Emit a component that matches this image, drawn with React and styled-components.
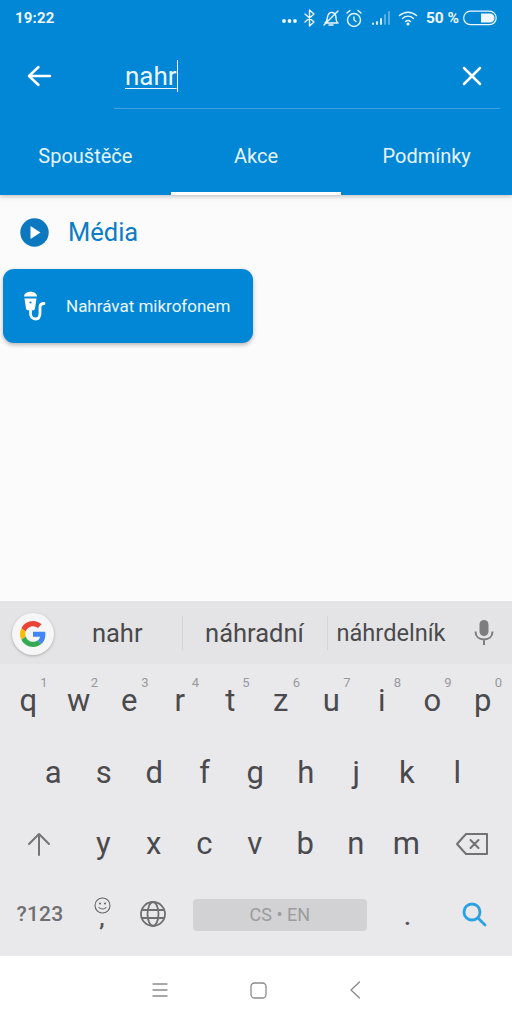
import React from 'react';
import styled, { createGlobalStyle } from 'styled-components';

const Global = createGlobalStyle`
  html, body { margin: 0; padding: 0; background: #fbfbfc; }
  * { box-sizing: border-box; }
`;
const Page = styled.div`
  width: 512px; height: 1024px; display: flex; flex-direction: column; overflow: hidden;
  font-family: Roboto, "Liberation Sans", sans-serif; background: #fbfbfc;
`;
const Header = styled.header`
  height: 195px; background: #0286d6; color: #fff; display: flex; flex-direction: column;
  box-shadow: 0 2px 4px rgba(0,0,0,.2); position: relative; z-index: 1;
`;
const StatusBar = styled.div`
  height: 36px; display: flex; align-items: center; justify-content: space-between; padding: 0 15px 0 15px;
`;
const Clock = styled.span`font-size: 15px; font-weight: 700; letter-spacing: .2px; color: #eef7fd;`;
const StatusIcons = styled.div`display: flex; align-items: center; color: #eef7fd;`;
const Spacer = styled.span`width: ${p => p.$w}px;`;
const Battery = styled.span`font-size: 15.5px; font-weight: 700; margin: 0 4px 0 8px;`;
const SearchRow = styled.div`
  height: 73px; display: flex; align-items: stretch; padding-right: 12px;
`;
const IconSlot = styled.div`
  width: 114px; display: flex; align-items: center; padding: 6px 0 0 26px;
`;
const SearchField = styled.div`
  flex: 1; display: flex; align-items: center; justify-content: space-between;
  border-bottom: 1px solid #3ba3e2; padding: 7px 17px 0 11px;
`;
const Query = styled.span`
  font-size: 26px; line-height: 32px; text-decoration: underline; text-decoration-thickness: 1px;
  text-underline-offset: 3px; border-right: 1px solid #fff; color: #eaf6fd;
`;
const Tabs = styled.nav`flex: 1; display: grid; grid-template-columns: repeat(3, 1fr);`;
const Tab = styled.div`
  display: flex; align-items: center; justify-content: center; font-size: 20px; color: #e6f4fc;
  padding-top: 10px; border-bottom: 3px solid ${p => (p.$active ? '#fff' : 'transparent')};
`;
const Content = styled.main`flex: 1; padding: 0 0 0 3px;`;
const SectionTitle = styled.div`
  height: 74px; display: flex; align-items: center; gap: 19px; padding: 0 0 0 17px;
  font-size: 25.5px; color: #0b7cc6;
`;
const ActionCard = styled.div`
  width: 250px; height: 74px; border-radius: 11px; background: #0286d6; color: #eaf6fd;
  display: flex; align-items: center; gap: 20px; padding-left: 20px; font-size: 17px;
  box-shadow: 0 2px 4px rgba(0,0,0,.28);
`;
const Keyboard = styled.section`height: 355px; background: #e9e8eb; display: flex; flex-direction: column;`;
const Suggestions = styled.div`
  height: 63px; background: #e4e4e6; display: grid; grid-template-columns: 66px 116.500px 145px 1fr 42px; align-items: center;
`;
const GoogleButton = styled.div`
  width: 42px; height: 42px; margin: 2px 0 0 12px; border-radius: 50%; background: #f6f6f6;
  box-shadow: 0 1px 3px rgba(0,0,0,.25); display: flex; align-items: center; justify-content: center;
`;
const Suggestion = styled.div`
  height: 34px; display: flex; align-items: center; justify-content: ${p => p.$start ? 'flex-start' : 'center'};
  font-size: ${p => p.$size || 25.5}px; color: #4a4a4c; padding: ${p => p.$pad || '0'};
  border-right: ${p => (p.$divider ? '1px solid #d4d4d6' : 'none')};
`;
const MicSlot = styled.div`display: flex; justify-content: center; padding-right: 14px;`;
const KeyRow = styled.div`
  height: ${p => p.$h}px; display: grid; grid-template-columns: repeat(${p => p.$cols}, 50.500px);
  padding-left: ${p => p.$inset}px; align-items: center;
`;
const ShiftRow = styled.div`
  height: 71px; display: grid; grid-template-columns: 78px repeat(7, 50.500px) 1fr; align-items: center;
`;
const Key = styled.div`
  position: relative; height: 100%; display: flex; align-items: center; justify-content: center;
  font-size: 31px; color: #4a4a4d;
`;
const Hint = styled.sup`
  position: absolute; right: 6px; top: 11px; font-size: 13px; line-height: 16px; color: #9a9a9c;
`;
const FnKey = styled.span`font-size: 21px; font-weight: 500; color: #6f6f72; letter-spacing: .2px; padding-left: 3px;`;
const EmojiStack = styled.div`display: flex; flex-direction: column; align-items: center; color: #555;`;
const Comma = styled.span`font-size: 22px; line-height: 10px; font-weight: 700; color: #555; height: 16px;`;
const LastRow = styled.div`
  height: 69px; display: grid; grid-template-columns: 76.800px 50.500px 50.500px 174px 1fr 76px; align-items: center;
`;
const LastKey = styled.div`display: flex; align-items: center; justify-content: center; height: 100%;`;
const SpaceBar = styled.div`
  height: 32px; margin-top: 2px; background: #d2d1d4; border-radius: 4px; color: #9c9c9e; font-size: 18px;
  display: flex; align-items: center; justify-content: center; margin-left: 15px; width: 174px;
`;
const Dot = styled.span`font-size: 22px; color: #555; font-weight: 700; padding: 0 0 0 27px; position: relative; top: 4px;`;
const NavBar = styled.footer`
  height: 68px; background: #fff; display: flex; align-items: center; justify-content: center; gap: 82px;
`;

const row1 = [['q','1'],['w','2'],['e','3'],['r','4'],['t','5'],['z','6'],['u','7'],['i','8'],['o','9'],['p','0']];
const row2 = ['a','s','d','f','g','h','j','k','l'];
const row3 = ['y','x','c','v','b','n','m'];

const Stroke = ({ w, h, sw = 2, color = 'currentColor', children }) => (
  <svg width={w} height={h} viewBox={`0 0 ${w} ${h}`} fill="none" stroke={color} strokeWidth={sw} strokeLinecap="round" strokeLinejoin="round">{children}</svg>
);

export default function App() {
  return (
    <Page>
      <Global />
      <Header>
        <StatusBar>
          <Clock>19:22</Clock>
          <StatusIcons>
            <Stroke w={20} h={18} sw={0}><circle cx="4" cy="12" r="1.9" fill="#eef7fd"/><circle cx="9.5" cy="12" r="1.9" fill="#eef7fd"/><circle cx="15" cy="12" r="1.9" fill="#eef7fd"/></Stroke>
            <Spacer $w={3} />
            <Stroke w={14} h={20} sw={1.4}><path d="M2 6l9 8-4.5 4V2L11 6 2 14"/></Stroke>
            <Spacer $w={5} />
            <Stroke w={18} h={18} sw={1.4}><path d="M3 14c2-1 2-3 2.500-6 .6-3 2.500-5 5-4.500C13 4 14 6 14 9c0 3 .6 4 2 5zM7 16h4M2 16L16 2"/></Stroke>
            <Spacer $w={5} />
            <Stroke w={18} h={19} sw={1.4}><circle cx="9" cy="11" r="6.500"/><path d="M9 8v3l2 1.500M2 4l3-2.500M16 4l-3-2.500"/></Stroke>
            <Spacer $w={8} />
            <Stroke w={20} h={16} sw={1.800}>
              <path d="M2 14v-.5M6 14v-2M10 14V9"/>
              <path d="M14 14V5M18 14V2" opacity=".4"/>
            </Stroke>
            <Spacer $w={7} />
            <Stroke w={20} h={16} sw={1.500}><path d="M1.500 5.500c5-4.500 12-4.500 17 0M4.500 8.500c3.300-3 7.700-3 11 0M7.500 11.500c1.500-1.300 3.500-1.300 5 0"/><circle cx="10" cy="14" r=".8" fill="currentColor"/></Stroke>
            <Battery>50 %</Battery>
            <svg width="34" height="16" viewBox="0 0 34 16"><rect x=".7" y="1.200" width="32.500" height="13.500" rx="6.700" fill="none" stroke="#eef7fd" strokeWidth="1.200"/><path d="M18 3.500h9a4.500 4.500 0 010 9h-9z" fill="#eef7fd"/></svg>
          </StatusIcons>
        </StatusBar>
        <SearchRow>
          <IconSlot>
            <Stroke w={26} h={24} sw={2.500} color="#fff"><path d="M24 12H3M12.500 3L3 12l9.500 9"/></Stroke>
          </IconSlot>
          <SearchField>
            <Query>nahr</Query>
            <Stroke w={22} h={22} sw={2.500} color="#fff"><path d="M3 3l16 16M19 3L3 19"/></Stroke>
          </SearchField>
        </SearchRow>
        <Tabs>
          <Tab>Spouštěče</Tab>
          <Tab $active>Akce</Tab>
          <Tab>Podmínky</Tab>
        </Tabs>
      </Header>
      <Content>
        <SectionTitle>
          <svg width="29" height="29" viewBox="0 0 29 29"><circle cx="14.500" cy="14.500" r="14.200" fill="#0b78c0"/><path d="M10.500 8v13l10-6.500z" fill="#fff"/></svg>
          Média
        </SectionTitle>
        <ActionCard>
          <svg width="23" height="30" viewBox="0 0 23 30" fill="none"><path d="M1 5.500C1 2.500 4 .8 7.500.8S14 2.500 14 5.500z" fill="#fff"/><path d="M1.500 7.500h12L12 17.500c-.3 1.200-1 1.800-1.800 1.800H4.800c-.8 0-1.500-.6-1.800-1.800z" fill="#fff"/><circle cx="7.500" cy="11.500" r="1.100" fill="#0286d6"/><path d="M7.500 19v3.500c0 3 1.800 5.500 5 5.500 3.500 0 4.500-2.500 4.500-6v-6c0-2 1-3.500 4-3.500" stroke="#fff" strokeWidth="2.800" strokeLinecap="round"/></svg>
          Nahrávat mikrofonem
        </ActionCard>
      </Content>
      <Keyboard>
        <Suggestions>
          <GoogleButton>
            <svg width="26" height="26" viewBox="0 0 48 48"><path fill="#EA4335" d="M24 9.500c3.500 0 6.700 1.300 9.100 3.500l6.800-6.800C35.800 2.400 30.200 0 24 0 14.600 0 6.500 5.400 2.600 13.200l7.900 6.200C12.400 13.700 17.700 9.500 24 9.500z"/><path fill="#4285F4" d="M47 24.500c0-1.600-.2-3.200-.4-4.500H24v9h13c-.6 3-2.200 5.500-4.800 7.200l7.700 6C44.400 38 47 31.800 47 24.500z"/><path fill="#FBBC05" d="M10.500 28.600c-.5-1.400-.8-3-.8-4.600s.3-3.200.8-4.600l-7.900-6.200C.9 16.500 0 20.100 0 24s.9 7.500 2.600 10.800z"/><path fill="#34A853" d="M24 48c6.500 0 11.900-2.100 15.900-5.800l-7.700-6c-2.200 1.500-4.900 2.300-8.200 2.300-6.300 0-11.600-4.200-13.500-9.900l-7.900 6.200C6.500 42.600 14.600 48 24 48z"/></svg>
          </GoogleButton>
          <Suggestion $divider $pad="0 13px 0 0">nahr</Suggestion>
          <Suggestion $divider>náhradní</Suggestion>
          <Suggestion $start $pad="0 0 0 9px" $size={23.6}>náhrdelník</Suggestion>
          <MicSlot>
            <svg width="20" height="27" viewBox="0 0 20 27" fill="none"><rect x="5.500" y="1" width="9" height="16" rx="4.500" fill="#7d7d80"/><path d="M1.500 12.500c0 5 3.500 8 8.500 8s8.500-3 8.500-8M10 20.500V26" stroke="#7d7d80" strokeWidth="2"/></svg>
          </MicSlot>
        </Suggestions>
        <KeyRow $cols={10} $h={72} $inset={3}>
          {row1.map(([k, n]) => <Key key={k}>{k}<Hint>{n}</Hint></Key>)}
        </KeyRow>
        <KeyRow $cols={9} $h={72} $inset={28}>
          {row2.map(k => <Key key={k}>{k}</Key>)}
        </KeyRow>
        <ShiftRow>
          <Key><Stroke w={24} h={24} sw={2} color="#747477"><path d="M12 23V2M2 12L12 2l10 10"/></Stroke></Key>
          {row3.map(k => <Key key={k}>{k}</Key>)}
          <Key><Stroke w={34} h={24} sw={2} color="#727275"><path d="M11 2h21v20H11L2 12zM15.500 8l8 8M23.500 8l-8 8"/></Stroke></Key>
        </ShiftRow>
        <LastRow>
          <LastKey><FnKey>?123</FnKey></LastKey>
          <LastKey>
            <EmojiStack>
              <Stroke w={17} h={17} sw={1.100} color="#666"><circle cx="8.500" cy="8.500" r="7.500"/><path d="M5 10.500c1.500 2 5.500 2 7 0"/><circle cx="6" cy="6.500" r=".5"/><circle cx="11" cy="6.500" r=".5"/></Stroke>
              <Comma>,</Comma>
            </EmojiStack>
          </LastKey>
          <LastKey>
            <Stroke w={28} h={28} sw={1.800} color="#6f6f72"><circle cx="14" cy="14" r="12"/><ellipse cx="14" cy="14" rx="5.500" ry="12"/><path d="M3 10h22M3 18h22"/></Stroke>
          </LastKey>
          <SpaceBar>CS • EN</SpaceBar>
          <LastKey><Dot>.</Dot></LastKey>
          <LastKey>
            <Stroke w={26} h={26} sw={2.800} color="#2aa1e2"><circle cx="11" cy="11" r="8"/><path d="M17 17l7 7"/></Stroke>
          </LastKey>
        </LastRow>
      </Keyboard>
      <NavBar>
        <Stroke w={16} h={16} sw={1.300} color="#8a8a8c"><path d="M1 2h14M1 8h14M1 14h14"/></Stroke>
        <Stroke w={17} h={17} sw={1.300} color="#8a8a8c"><rect x="1" y="1" width="15" height="15" rx="3.500"/></Stroke>
        <Stroke w={12} h={18} sw={1.300} color="#8a8a8c"><path d="M10.500 1L2 9l8.500 8"/></Stroke>
      </NavBar>
    </Page>
  );
}
